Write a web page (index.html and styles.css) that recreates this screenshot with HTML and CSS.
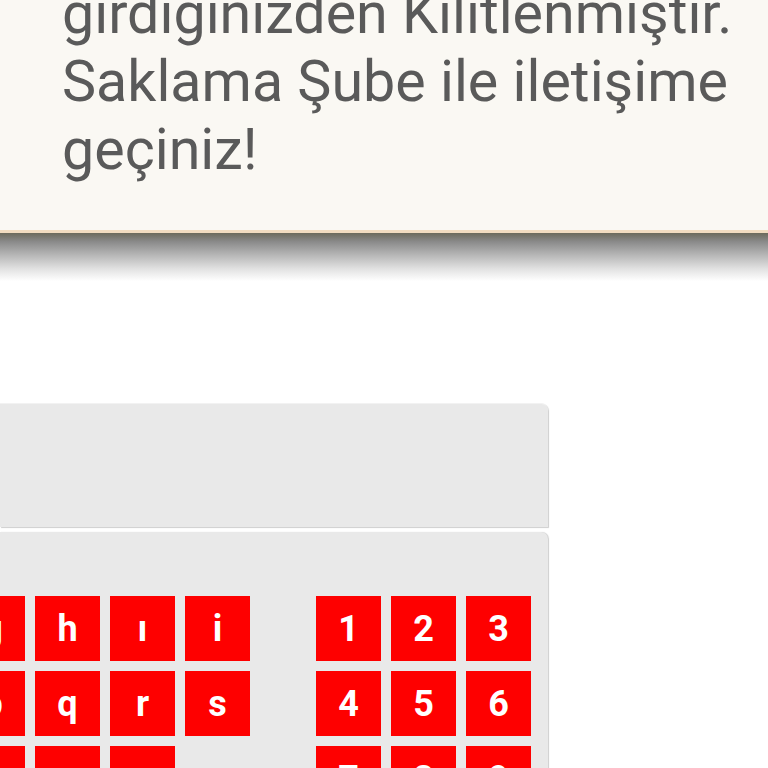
FILE: index.html
```html
<!DOCTYPE html>
<html lang="tr">
<head>
<meta charset="utf-8">
<link rel="stylesheet" href="styles.css">
</head>
<body>
<div class="page">
  <div class="notice">
    <p class="notice-text">girdiginizden Kilitlenmiştir. Saklama Şube ile iletişime geçiniz!</p>
  </div>
  <div class="notice-shadow"></div>
  <div class="keyboard">
    <div class="display"></div>
    <div class="keys">
      <div class="key-row">
        <div class="letters">
          <span class="key">g</span><span class="key">ğ</span><span class="key">h</span><span class="key">ı</span><span class="key">i</span>
        </div>
        <div class="digits">
          <span class="key">1</span><span class="key">2</span><span class="key">3</span>
        </div>
      </div>
      <div class="key-row">
        <div class="letters">
          <span class="key">ö</span><span class="key">p</span><span class="key">q</span><span class="key">r</span><span class="key">s</span>
        </div>
        <div class="digits">
          <span class="key">4</span><span class="key">5</span><span class="key">6</span>
        </div>
      </div>
      <div class="key-row">
        <div class="letters">
          <span class="key">w</span><span class="key">x</span><span class="key">y</span><span class="key">z</span><span class="key key-empty"></span>
        </div>
        <div class="digits">
          <span class="key">7</span><span class="key">8</span><span class="key">9</span>
        </div>
      </div>
    </div>
  </div>
</div>
</body>
</html>
```
FILE: styles.css
```css
html, body {
  margin: 0;
  padding: 0;
  background: #ffffff;
  overflow: hidden;
}
.page {
  width: 768px;
  height: 768px;
  overflow: hidden;
  font-family: Roboto, "Noto Sans", sans-serif;
}
.notice {
  display: flow-root;
  background: #faf8f3;
  border-bottom: 3px solid #f1dcc0;
  padding: 0 20px 0 62px;
  height: 233px;
  box-sizing: border-box;
}
.notice-text {
  margin: -20px 0 0 0;
  font-size: 57.4px;
  line-height: 68px;
  color: #5a5a5a;
  font-weight: 400;
}
.notice-shadow {
  height: 48px;
  background: linear-gradient(#6b6a5c 0%, #8a8a8a 18%, #b5b5b5 45%, #e2e2e2 75%, #ffffff 100%);
}
.keyboard {
  margin-top: 122px;
  width: 548px;
}
.display {
  height: 123px;
  background: #e9e9e9;
  border-top-right-radius: 7px;
  box-shadow: 1px 1px 1px #cfcfcf;
  border-top: 1px solid #f2f2f2;
}
.keys {
  margin-top: 5px;
  background: #e9e9e9;
  border-top-right-radius: 7px;
  box-shadow: 1px 0 1px #cfcfcf;
  padding: 64px 17px 40px 0;
  display: flex;
  flex-direction: column;
  gap: 10px;
}
.key-row {
  display: flex;
  justify-content: flex-end;
  gap: 66px;
}
.letters, .digits {
  display: flex;
  gap: 10px;
  flex-shrink: 0;
}
.key {
  width: 65px;
  height: 65px;
  background: #fe0000;
  color: #ffffff;
  font-weight: 700;
  font-size: 36px;
  display: flex;
  align-items: center;
  justify-content: center;
  flex-shrink: 0;
}
.key-empty {
  background: transparent;
}
```
